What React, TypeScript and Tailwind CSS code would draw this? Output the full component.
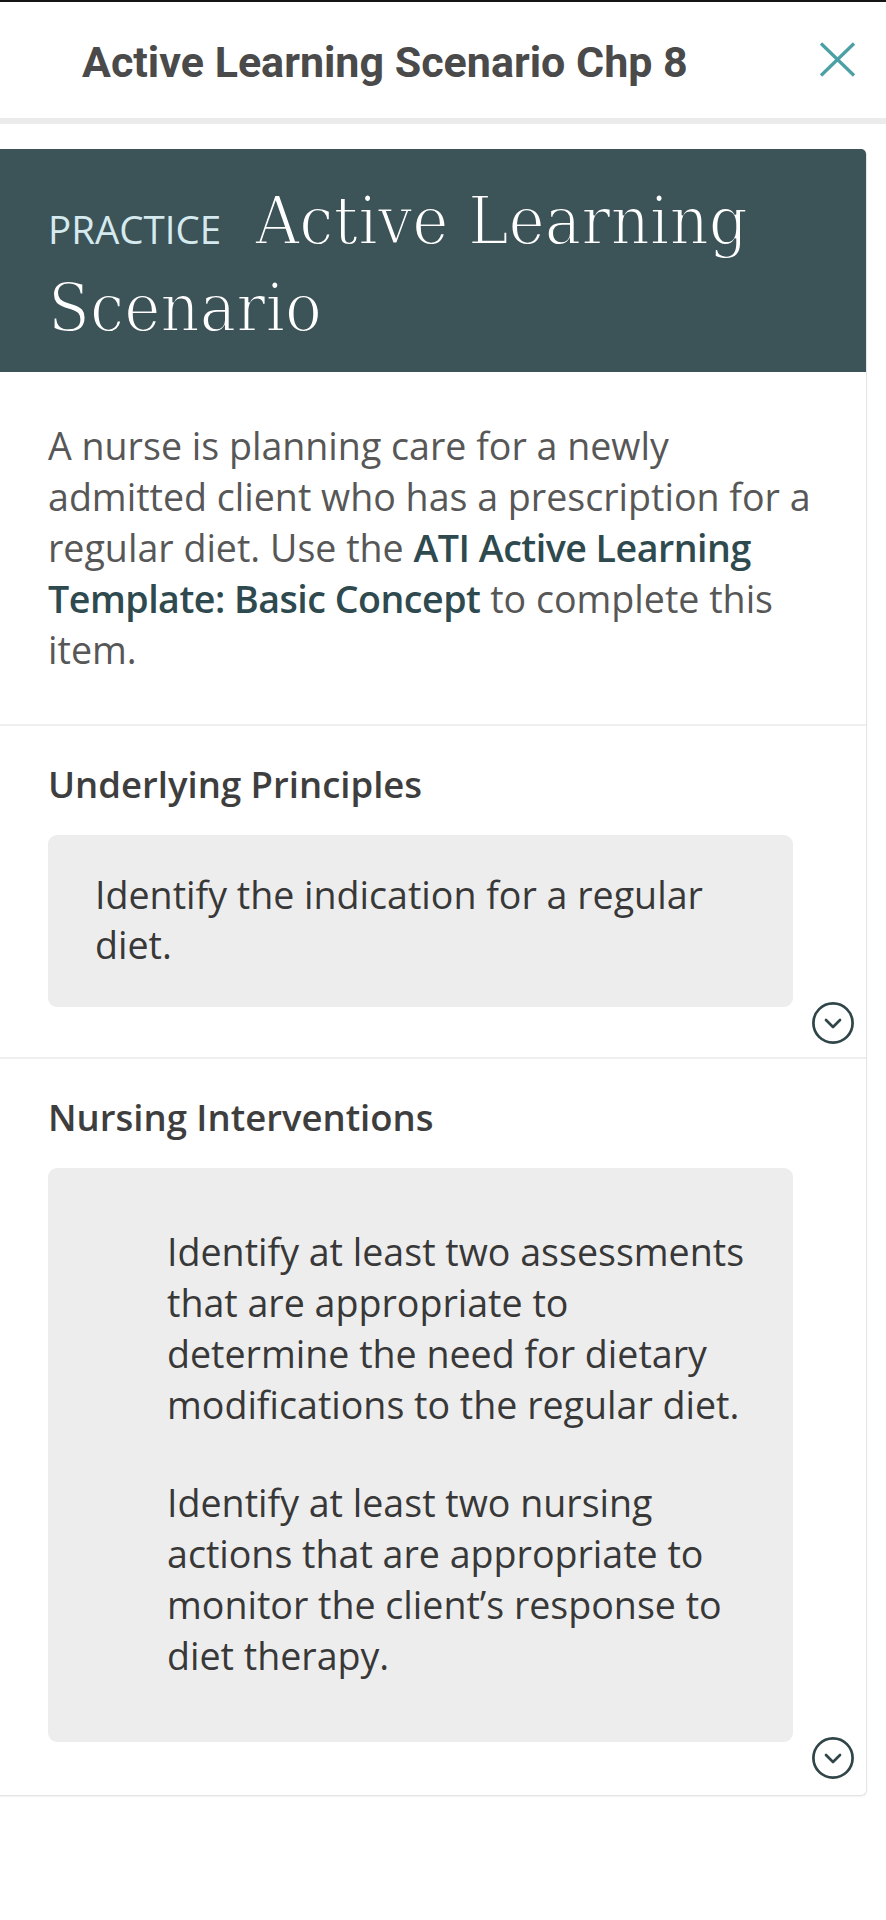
import { ReactNode } from "react";

function ChevronCircle() {
    return (
        <svg width="44" height="44" viewBox="0 0 44 44" fill="none">
            <circle cx="22" cy="22" r="19.6" stroke="#2f4548" strokeWidth="2.7" />
            <polyline
                points="15,19 22,26 29,19"
                stroke="#2f4548"
                strokeWidth="2.7"
                strokeLinecap="round"
                strokeLinejoin="round"
            />
        </svg>
    );
}

function Section({ title, children, last }: { title: string; children: ReactNode; last?: boolean }) {
    return (
        <div className={`pl-[48px] pr-[11px] pt-[33px] ${last ? "pb-[15px]" : "pb-[12px] border-b-2 border-[#efefef]"}`}>
            <h2 className="text-[36.5px] leading-[50px] font-semibold text-[#3e3e3e]">{title}</h2>
            <div className="mt-[26px] mr-[62px] rounded-[9px] bg-[#ededed]">{children}</div>
            <div className="flex justify-end -mt-[6px]">
                <ChevronCircle />
            </div>
        </div>
    );
}

export default function App() {
    return (
        <div className="min-h-[1920px] w-[886px] bg-white" style={{ fontFamily: '"Open Sans", sans-serif' }}>
            <div className="h-[2px] bg-[#151515]" />

            {/* top bar */}
            <div className="h-[116px] flex items-center pl-[82px] pr-[30px]">
                <h1
                    className="flex-1 text-[43px] font-bold text-[#4a4a4a] leading-none pt-[4px]"
                    style={{ fontFamily: "Roboto, sans-serif" }}
                >
                    Active Learning Scenario Chp 8
                </h1>
                <svg width="37" height="35" viewBox="0 0 37 35" fill="none" className="mb-[2px]">
                    <line x1="2" y1="1.5" x2="35" y2="33.5" stroke="#4aa0a5" strokeWidth="3.2" />
                    <line x1="35" y1="1.5" x2="2" y2="33.5" stroke="#4aa0a5" strokeWidth="3.2" />
                </svg>
            </div>
            <div className="h-[6px] bg-[#ebebeb]" />
            <div className="h-[25px]" />

            {/* card */}
            <div className="w-[867px] border-r border-b border-[#e4e4e4] rounded-r-[6px] shadow-[0_1px_2px_rgba(0,0,0,0.06)]">
                <div className="bg-[#3c5358] rounded-tr-[5px] pl-[48px] pr-[30px] pt-[28px] pb-[21px]">
                    <p
                        className="text-white text-[68px] leading-[87px] font-stretch-condensed [-webkit-text-stroke:1.8px_#3c5358]"
                        style={{ fontFamily: '"DejaVu Serif Condensed", "DejaVu Serif", serif' }}
                    >
                        <span
                            className="text-[#d5eaef] text-[38.5px] leading-none uppercase mr-[34px] font-stretch-normal [-webkit-text-stroke:0]"
                            style={{ fontFamily: '"Open Sans", sans-serif' }}
                        >
                            Practice
                        </span>
                        Active Learning Scenario
                    </p>
                </div>

                <div className="pl-[48px] pr-[30px] pt-[48px] pb-[49px] border-b-2 border-[#efefef]">
                    <p className="text-[37.6px] leading-[51px] text-[#575757]">
                        A nurse is planning care for a newly admitted client who has a prescription for a regular diet. Use
                        the <span className="font-semibold text-[#2e4a4f] tracking-[-0.5px]">ATI Active Learning Template: Basic Concept</span> to
                        complete this item.
                    </p>
                </div>

                <Section title="Underlying Principles">
                    <p className="pl-[47px] pr-[40px] pt-[35px] pb-[37px] text-[37.6px] leading-[50px] text-[#383838]">
                        Identify the indication for a regular diet.
                    </p>
                </Section>

                <Section title="Nursing Interventions" last>
                    <div className="pl-[119px] pr-[40px] pt-[58px] pb-[61px] text-[37.6px] leading-[51px] text-[#383838] flex flex-col gap-[47px]">
                        <p>Identify at least two assessments that are appropriate to determine the need for dietary modifications to the regular diet.</p>
                        <p>Identify at least two nursing actions that are appropriate to monitor the client’s response to diet therapy.</p>
                    </div>
                </Section>
            </div>
        </div>
    );
}
